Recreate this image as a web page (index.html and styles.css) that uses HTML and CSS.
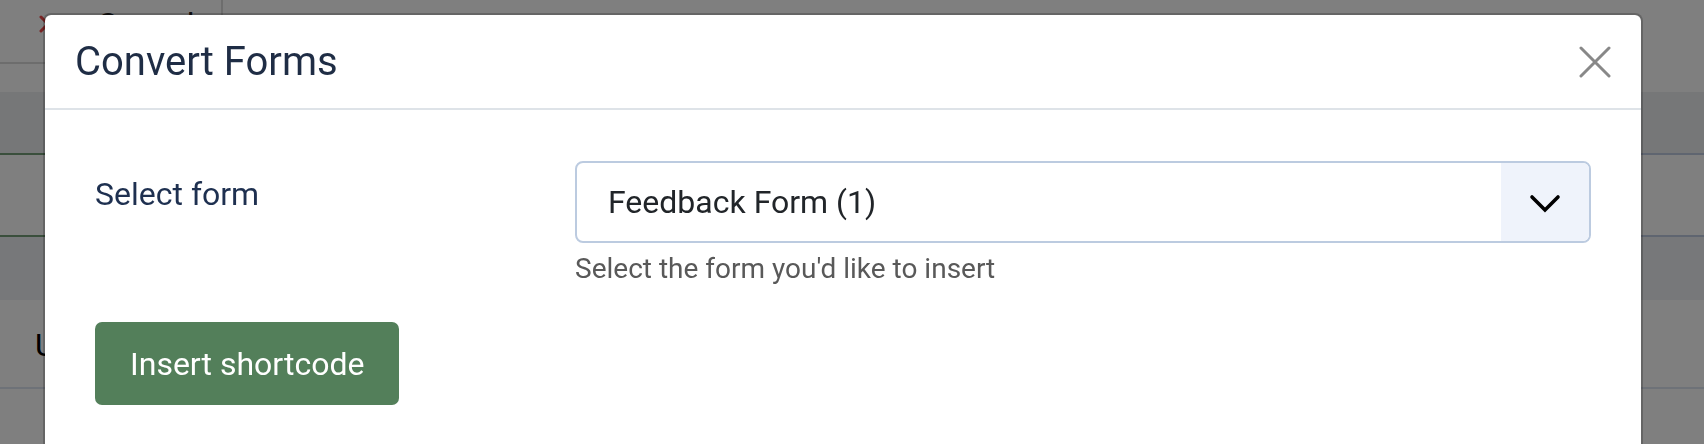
FILE: index.html
```html
<!DOCTYPE html>
<html lang="en">
<head>
<meta charset="utf-8">
<title>Convert Forms</title>
<link rel="stylesheet" href="styles.css">
</head>
<body>
<div class="page">
  <div class="toolbar">
    <div class="cancel-btn">
      <svg class="cancel-icon" width="18" height="18" viewBox="0 0 18 18"><path d="M2 2 L16 16 M16 2 L2 16" stroke="#f04848" stroke-width="3" stroke-linecap="round" fill="none"/></svg>
      <span class="cancel-text">Cancel</span>
    </div>
  </div>
  <div class="table">
    <div class="trow thead"><div class="cl"></div><div class="cr"></div></div>
    <div class="trow r1"><div class="cl"></div><div class="cr"></div></div>
    <div class="trow r2"><div class="cl"></div><div class="cr"></div></div>
    <div class="trow r3"><div class="cl"><span class="row-text">Untitled</span></div><div class="cr"></div></div>
    <div class="trow r4"><div class="cl"></div><div class="cr"></div></div>
  </div>
</div>
<div class="backdrop"></div>
<div class="modal">
  <div class="modal-header">
    <h3 class="modal-title">Convert Forms</h3>
    <button class="close-btn" type="button" aria-label="Close">
      <svg width="32" height="32" viewBox="0 0 32 32"><path d="M2 2 L30 30 M30 2 L2 30" stroke="#888888" stroke-width="3" stroke-linecap="round" fill="none"/></svg>
    </button>
  </div>
  <div class="modal-body">
    <div class="form-row">
      <label class="form-label">Select form</label>
      <div class="form-control-wrap">
        <div class="select">
          <span class="select-value">Feedback Form (1)</span>
          <span class="select-arrow">
            <svg width="32" height="20" viewBox="0 0 32 20"><path d="M3 3 L16 16 L29 3" stroke="#000000" stroke-width="3.6" stroke-linecap="round" stroke-linejoin="miter" fill="none"/></svg>
          </span>
        </div>
        <div class="form-text">Select the form you'd like to insert</div>
      </div>
    </div>
    <button class="btn-insert" type="button">Insert shortcode</button>
  </div>
</div>
</body>
</html>
```
FILE: styles.css
```css
* { box-sizing: border-box; }
html, body {
  margin: 0;
  padding: 0;
  width: 1704px;
  height: 444px;
  overflow: hidden;
  background: #ffffff;
  font-family: Roboto, "Liberation Sans", Arial, sans-serif;
}

/* background page */
.page { width: 1704px; }
.toolbar {
  height: 92px;
  background: #fefefe;
  overflow: hidden;
}
.cancel-btn {
  display: flex;
  align-items: center;
  width: 243px;
  height: 84px;
  margin-top: -20px;
  margin-left: -20px;
  padding-left: 57px;
  padding-top: 3px;
  border: 2px solid #dadada;
  border-radius: 8px;
  background: #ffffff;
}
.cancel-icon { flex: none; }
.cancel-text {
  margin-left: 40px;
  font-size: 32px;
  color: #222222;
}
.table { display: flex; flex-direction: column; }
.trow { display: flex; }
.cl { width: 45px; flex: none; overflow: hidden; }
.cr { flex: 1; }
.thead { height: 61px; background: #eceef0; }
.r1 { height: 82px; background: #ffffff; border-top: 2px solid #becae0; }
.r1 .cl { border-top: 2px solid #749e78; margin-top: -2px; }
.r2 { height: 65px; background: #eef0f4; border-top: 2px solid #becae0; }
.r2 .cl { border-top: 2px solid #749e78; margin-top: -2px; }
.r3 { height: 87px; background: #ffffff; }
.r3 .cl { padding-top: 26px; padding-left: 35px; }
.row-text { font-size: 32px; color: #000000; white-space: nowrap; }
.r4 { height: 60px; background: #ffffff; border-top: 2px solid #dce4f0; }

.backdrop {
  position: fixed;
  inset: 0;
  background: rgba(0, 0, 0, 0.5);
}

/* modal */
.modal {
  position: absolute;
  left: 43px;
  top: 13px;
  width: 1600px;
  height: 470px;
  background: #ffffff;
  border: 2px solid rgba(0, 0, 0, 0.2);
  border-radius: 8px;
  background-clip: padding-box;
}
.modal-header {
  display: flex;
  align-items: center;
  justify-content: space-between;
  height: 95px;
  padding: 0 30px;
  border-bottom: 2px solid #dee3e8;
}
.modal-title {
  margin: 0;
  font-size: 40px;
  font-weight: 400;
  line-height: 1.2;
  color: #1f2d45;
}
.close-btn {
  display: flex;
  padding: 0;
  margin: 0;
  border: 0;
  background: none;
  width: 32px;
  height: 32px;
}
.modal-body {
  padding: 51px 50px 0 50px;
}
.form-row {
  display: grid;
  grid-template-columns: 480px 1fr;
}
.form-label {
  padding-top: 9px;
  font-size: 32px;
  line-height: 1.5;
  color: #1e3050;
}
.select {
  display: flex;
  height: 82px;
  border: 2px solid #bccbe0;
  border-radius: 8px;
  overflow: hidden;
}
.select-value {
  flex: 1;
  display: flex;
  align-items: center;
  padding-left: 31px;
  font-size: 32px;
  color: #212529;
}
.select-arrow {
  width: 88px;
  flex: none;
  display: flex;
  align-items: center;
  justify-content: center;
  padding-top: 4px;
  background: #eff3fb;
}
.select-arrow svg { display: block; }
.form-text {
  margin-top: 5px;
  font-size: 28px;
  line-height: 1.5;
  color: #595959;
}
.btn-insert {
  display: block;
  margin-top: 32px;
  height: 83px;
  padding: 0 35px;
  border: 0;
  border-radius: 7px;
  background: #537f5a;
  color: #ffffff;
  font-family: Roboto, "Liberation Sans", Arial, sans-serif;
  font-size: 32px;
  line-height: 1;
}
```
